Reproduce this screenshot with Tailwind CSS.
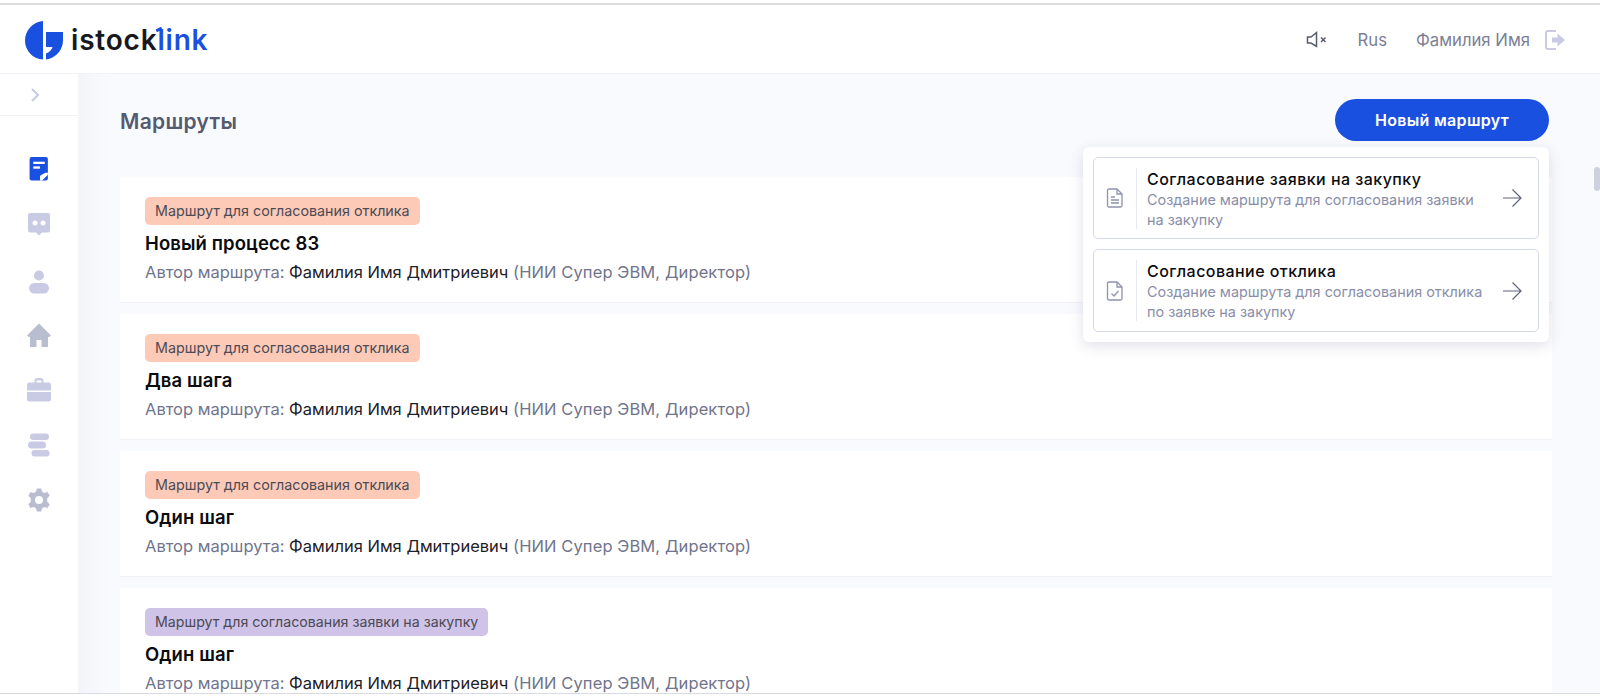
<!DOCTYPE html>
<html lang="ru">
<head>
  <meta charset="UTF-8" />
  <title>Маршруты - istock link</title>
  <script src="https://cdn.jsdelivr.net/npm/@tailwindcss/browser@4"></script>
</head>
<body class="bg-white h-[699px] overflow-hidden font-['Inter','Noto_Sans',sans-serif]">
  <div class="h-[699px] flex flex-col relative">
    <!-- шапка -->
    <header class="h-[74px] shrink-0 bg-white flex flex-col">
      <div class="h-[2px] bg-[#dcdcdc] mt-[3px]"></div>
      <div class="flex-1 flex items-center pl-[25px] pr-[35px] pt-[3px] justify-between border-b border-[#f1f2f7]">
        <div class="flex items-center -mt-[1px]">
          <svg width="38" height="39" viewBox="0 0 38 39">
            <path d="M18 0V38.500C7.500 38 0 29.500 0 19.500S7.500 1 18 0Z" fill="#1a50e0"/>
            <path d="M21 11H38V19C38 29 31 37 21 38.500V32.500C25 31 27 28 27.500 26H21Z" fill="#1a50e0"/>
          </svg>
          <div class="ml-[8px] text-[28px] font-semibold tracking-[0.8px] leading-none">
            <span class="text-[#17191f]">istock</span><span class="text-[#1a50e0] relative">l<span class="absolute left-[-1px] top-[5px] w-[6px] h-[3px] bg-[#1a50e0] -rotate-[25deg]"></span>ink</span>
          </div>
        </div>
        <div class="flex items-center text-[#7b8097] text-[16.700px]">
          <svg width="25" height="20" viewBox="0 0 24 20" fill="none" stroke="#565b70" stroke-width="1.500">
            <path d="M2 7H5.500L11 2.500V16.500L5.500 13H2Z"/>
            <path d="M15.500 7.500L20 12M20 7.500L15.500 12"/>
          </svg>
          <span class="ml-[28px]">Rus</span>
          <span class="ml-[29px]">Фамилия Имя</span>
          <svg class="ml-[15px]" width="20" height="22" viewBox="0 0 20 22" fill="none">
            <path d="M11 2H3A2 2 0 0 0 1 4V18A2 2 0 0 0 3 20H11" stroke="#c8cbe3" stroke-width="2"/>
            <path d="M7 8.500H12.500V4.500L20 11L12.500 17.500V13.500H7Z" fill="#c8cbe3"/>
          </svg>
        </div>
      </div>
    </header>

    <div class="flex-1 flex min-h-0">
      <!-- боковое меню -->
      <aside class="w-[78px] shrink-0 bg-white flex flex-col items-center">
        <div class="w-full h-[42px] border-b border-[#f1f2f7] flex items-center justify-center pr-[8px]">
          <svg width="12" height="16" viewBox="0 0 12 16" fill="none" stroke="#c8cbe3" stroke-width="2"><path d="M3 2L9 8L3 14"/></svg>
        </div>
        <div class="flex flex-col items-center mt-[41px] gap-[31px]">
          <svg width="24" height="24" viewBox="0 0 18 23">
            <rect width="17.500" height="22.500" rx="2" fill="#1a50e0"/>
            <rect x="3.500" y="4.500" width="11" height="2.200" fill="#fff"/>
            <rect x="3.500" y="9" width="6.500" height="2.200" fill="#fff"/>
            <path d="M10 22.500V18L15 15H17.500V17L12 22.500Z" fill="#fff"/>
          </svg>
          <svg width="24" height="24" viewBox="0 0 24 24">
            <path d="M3 1H21A2 2 0 0 1 23 3V18.500A2 2 0 0 1 21 20.500H15L12 23.500L9 20.500H3A2 2 0 0 1 1 18.500V3A2 2 0 0 1 3 1Z" fill="#c8cbe3"/>
            <circle cx="8" cy="11" r="2.500" fill="#fff"/><circle cx="16" cy="11" r="2.500" fill="#fff"/>
          </svg>
          <svg width="24" height="24" viewBox="0 0 24 24" fill="#c8cbe3" class="mt-[3px]">
            <circle cx="12" cy="5.500" r="5"/>
            <rect x="2" y="13" width="20" height="10.500" rx="5.250"/>
          </svg>
          <svg width="24" height="24" viewBox="0 0 24 24" fill="#b9bdd0" class="-mt-[2px]">
            <path d="M12 0.500L24 12.500L22 14H21V24H14.500V17H9.500V24H3V14H2L0 12.500Z"/>
          </svg>
          <svg width="24" height="24" viewBox="0 0 24 24" fill="#c8cbe3">
            <path d="M7.500 4.500V2.500C7.500 1 9 0 10 0H14C15 0 16.500 1 16.500 2.500V4.500H21.500A2.500 2.500 0 0 1 24 7V12.500H0V7A2.500 2.500 0 0 1 2.500 4.500ZM9.500 2.500V4.500H14.500V2.500Z" fill-rule="evenodd"/>
            <path d="M0 14H24V21A2.500 2.500 0 0 1 21.500 23.500H2.500A2.500 2.500 0 0 1 0 21Z"/>
          </svg>
          <svg width="24" height="24" viewBox="0 0 24 24" fill="#c8cbe3">
            <rect x="3" y="0.500" width="19" height="6.500" rx="3.250"/>
            <rect x="1" y="8.500" width="18" height="7" rx="3.500"/>
            <rect x="4.500" y="17" width="18" height="6.500" rx="3.250"/>
          </svg>
          <svg width="24" height="24" viewBox="0 0 24 24" fill="#b9bdd0">
            <path fill-rule="evenodd" d="M9.800 0.500H14.200L15 3.800L17.200 5L20.500 4L22.700 7.800L20.200 10.200V13.800L22.700 16.200L20.500 20L17.200 19L15 20.200L14.200 23.500H9.800L9 20.200L6.800 19L3.500 20L1.300 16.200L3.800 13.800V10.200L1.300 7.800L3.500 4L6.800 5L9 3.800ZM12 8A4 4 0 1 0 12 16A4 4 0 1 0 12 8Z"/>
          </svg>
        </div>
      </aside>

      <!-- контент -->
      <main class="flex-1 min-w-0 bg-[#f9fafd] bg-gradient-to-r from-[#f3f5fa] to-[#f9fafd] to-[2%] pl-[42px] pr-[48px] relative overflow-hidden">
        <div class="h-[103px] flex items-start justify-between pr-[3px]">
          <h1 class="text-[21px] font-semibold tracking-[0.3px] text-[#555a70] mt-[35px] leading-[26px]">Маршруты</h1>
          <button class="mt-[25px] w-[214px] h-[42px] rounded-full bg-[#1a50e0] text-white text-[16px] font-semibold tracking-[0.3px]">Новый маршрут</button>
        </div>
        <div id="routes" class="flex flex-col gap-[11px]">
          <div class="h-[126px] bg-white px-[25px] pt-[20px] border-b border-[#f1f2f7]">
            <span class="inline-block h-[28px] px-[10px] rounded-[5px] bg-[#fecab8] text-[14.300px] leading-[28px] text-[#4b4a55]">Маршрут для согласования отклика</span>
            <div class="text-[18.500px] font-semibold tracking-[0.1px] text-[#0b0c10] leading-[24px] mt-[6px]">Новый процесс 83</div>
            <div class="text-[16.500px] text-[#70748c] leading-[22px] mt-[6px]">Автор маршрута: <span class="text-[#1e2027]">Фамилия Имя Дмитриевич</span> <span class="tracking-[0.1px]">(НИИ Супер ЭВМ, Директор)</span></div>
          </div>
          <div class="h-[126px] bg-white px-[25px] pt-[20px] border-b border-[#f1f2f7]">
            <span class="inline-block h-[28px] px-[10px] rounded-[5px] bg-[#fecab8] text-[14.300px] leading-[28px] text-[#4b4a55]">Маршрут для согласования отклика</span>
            <div class="text-[18.500px] font-semibold tracking-[0.1px] text-[#0b0c10] leading-[24px] mt-[6px]">Два шага</div>
            <div class="text-[16.500px] text-[#70748c] leading-[22px] mt-[6px]">Автор маршрута: <span class="text-[#1e2027]">Фамилия Имя Дмитриевич</span> <span class="tracking-[0.1px]">(НИИ Супер ЭВМ, Директор)</span></div>
          </div>
          <div class="h-[126px] bg-white px-[25px] pt-[20px] border-b border-[#f1f2f7]">
            <span class="inline-block h-[28px] px-[10px] rounded-[5px] bg-[#fecab8] text-[14.300px] leading-[28px] text-[#4b4a55]">Маршрут для согласования отклика</span>
            <div class="text-[18.500px] font-semibold tracking-[0.1px] text-[#0b0c10] leading-[24px] mt-[6px]">Один шаг</div>
            <div class="text-[16.500px] text-[#70748c] leading-[22px] mt-[6px]">Автор маршрута: <span class="text-[#1e2027]">Фамилия Имя Дмитриевич</span> <span class="tracking-[0.1px]">(НИИ Супер ЭВМ, Директор)</span></div>
          </div>
          <div class="h-[126px] bg-white px-[25px] pt-[20px] border-b border-[#f1f2f7]">
            <span class="inline-block h-[28px] px-[10px] rounded-[5px] bg-[#cfc3e8] text-[14.200px] leading-[28px] text-[#4b4a55]">Маршрут для согласования заявки на закупку</span>
            <div class="text-[18.500px] font-semibold tracking-[0.1px] text-[#0b0c10] leading-[24px] mt-[6px]">Один шаг</div>
            <div class="text-[16.500px] text-[#70748c] leading-[22px] mt-[6px]">Автор маршрута: <span class="text-[#1e2027]">Фамилия Имя Дмитриевич</span> <span class="tracking-[0.1px]">(НИИ Супер ЭВМ, Директор)</span></div>
          </div>
        </div>

        <!-- выпадающее меню -->
        <div class="absolute left-[1005px] top-[73px] w-[466px] h-[195px] bg-white rounded-[6px] shadow-[0_4px_14px_rgba(60,70,110,0.16)] p-[10px] flex flex-col gap-[10px]">
          <div class="h-[82px] border border-[#d5d8e8] rounded-[5px] flex items-center">
            <div class="w-[43px] h-[61px] border-r border-[#e6e8f2] flex items-center justify-center shrink-0">
              <svg width="18" height="20" viewBox="0 0 18 20" fill="none" stroke="#8f93ad" stroke-width="1.300"><path d="M3 1H11L16 6V17.500A1.500 1.500 0 0 1 14.500 19H3A1.500 1.500 0 0 1 1.500 17.500V2.500A1.500 1.500 0 0 1 3 1Z"/><path d="M11 1V6H16M5 9H9M5 12H13M5 15H13"/></svg>
            </div>
            <div class="ml-[10px] flex-1 pt-[2px]">
              <div class="text-[16px] font-medium text-[#0b0c10] leading-[20px] tracking-[0.45px]">Согласование заявки на закупку</div>
              <div class="text-[14.400px] text-[#8a8ea8] leading-[20px] mt-[1px] w-[345px]">Создание маршрута для согласования заявки на закупку</div>
            </div>
            <svg class="mr-[16px] shrink-0" width="20" height="20" viewBox="0 0 20 20" fill="none" stroke="#5f6479" stroke-width="1.200"><path d="M1 10H19M10.500 1.500L19 10L10.500 18.500"/></svg>
          </div>
          <div class="h-[83px] border border-[#d5d8e8] rounded-[5px] flex items-center">
            <div class="w-[43px] h-[61px] border-r border-[#e6e8f2] flex items-center justify-center shrink-0">
              <svg width="18" height="20" viewBox="0 0 18 20" fill="none" stroke="#8f93ad" stroke-width="1.300"><path d="M3 1H11L16 6V17.500A1.500 1.500 0 0 1 14.500 19H3A1.500 1.500 0 0 1 1.500 17.500V2.500A1.500 1.500 0 0 1 3 1Z"/><path d="M11 1V6H16M5.500 12.500L8 15L12.500 10"/></svg>
            </div>
            <div class="ml-[10px] flex-1 pt-[2px]">
              <div class="text-[16px] font-medium text-[#0b0c10] leading-[20px] tracking-[0.45px]">Согласование отклика</div>
              <div class="text-[14.400px] text-[#8a8ea8] leading-[20px] mt-[1px] w-[345px]">Создание маршрута для согласования отклика по заявке на закупку</div>
            </div>
            <svg class="mr-[16px] shrink-0" width="20" height="20" viewBox="0 0 20 20" fill="none" stroke="#5f6479" stroke-width="1.200"><path d="M1 10H19M10.500 1.500L19 10L10.500 18.500"/></svg>
          </div>
        </div>

        <!-- скролл -->
        <div class="absolute right-0 top-[93px] w-[6px] h-[24px] rounded-[3px] bg-[#ced1de]"></div>
      </main>
    </div>
    <div class="absolute left-0 right-0 bottom-[5px] h-px bg-[#d9dbe3]"></div>
    <div class="absolute left-0 right-0 bottom-0 h-[5px] bg-white"></div>
  </div>
</body>
</html>
